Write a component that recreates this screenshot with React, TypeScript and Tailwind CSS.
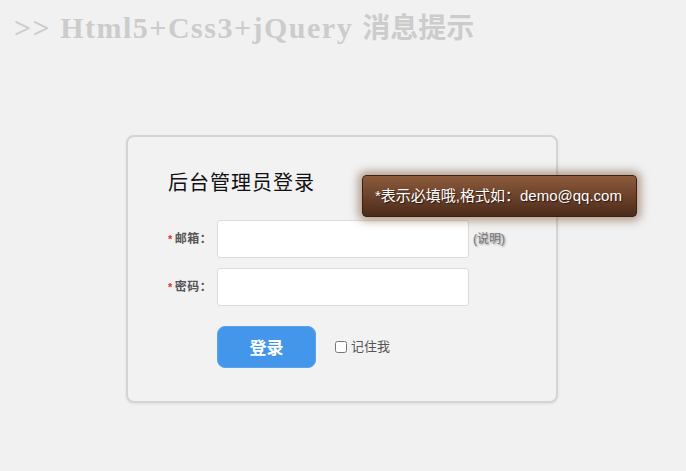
import React, { useState } from 'react';

const App: React.FC = () => {
  const [remember, setRemember] = useState(false);

  return (
    <div className="min-h-[471px] w-full bg-[#f1f1f1] font-['Liberation_Sans','Noto_Sans_CJK_SC',sans-serif]">
      <h1 className="px-[14px] pt-[10px] text-[30px] leading-[36px] font-bold tracking-[1.5px] text-[#cccccc] font-['Liberation_Serif','Noto_Sans_CJK_SC',serif]">
        &gt;&gt; Html5+Css3+jQuery <span className="text-[28px] tracking-normal">消息提示</span>
      </h1>

      <div className="relative ml-[126px] mt-[88px] w-[432px] h-[268px] rounded-[8px] border-2 border-[#d4d4d4] bg-[#f2f2f2] shadow-[0_1px_3px_rgba(0,0,0,0.08)] px-[40px] pt-[31px]">
        <h2 className="text-[20px] leading-[28px] tracking-[1px] text-[#111] font-['Noto_Sans_CJK_SC',serif]">
          后台管理员登录
        </h2>

        <div className="mt-[24px] flex flex-col gap-[10px]">
          <div className="flex items-center">
            <label className="w-[42px] mr-[7px] text-[12px] font-bold text-[#555] whitespace-nowrap tracking-[0.5px]">
              <span className="text-[#d33] text-[11px] mr-[2px]">*</span>邮箱：
            </label>
            <input className="w-[252px] h-[38px] rounded-[3px] border border-[#dcdcdc] bg-white outline-none px-2 text-[14px]" />
            <span className="ml-[4px] text-[12px] text-[#777] [text-shadow:1px_1px_2px_rgba(0,0,0,0.45)]">(说明)</span>
          </div>
          <div className="flex items-center">
            <label className="w-[42px] mr-[7px] text-[12px] font-bold text-[#555] whitespace-nowrap tracking-[0.5px]">
              <span className="text-[#d33] text-[11px] mr-[2px]">*</span>密码：
            </label>
            <input type="password" className="w-[252px] h-[38px] rounded-[3px] border border-[#dcdcdc] bg-white outline-none px-2 text-[14px]" />
          </div>
        </div>

        <div className="mt-[20px] ml-[49px] flex items-center">
          <button className="w-[99px] h-[42px] rounded-[8px] bg-[#4496ea] border border-[#5aa2ec] text-white text-[17px] font-bold font-['Noto_Sans_CJK_SC',serif]">
            登录
          </button>
          <label className="ml-[19px] flex items-center text-[13px] text-[#555]">
            <input
              type="checkbox"
              checked={remember}
              onChange={() => setRemember(!remember)}
              className="w-[12px] h-[12px] mr-[4px] m-0"
            />
            记住我
          </label>
        </div>

        <div className="absolute left-[234px] top-[38px] w-[275px] h-[42px] rounded-[4px] border border-[#3a2012] bg-gradient-to-b from-[#8d5b3c] to-[#4c2b1a] shadow-[0_0_9px_4px_rgba(120,80,50,0.5)] flex items-center pl-[12px] text-[15px] text-white whitespace-nowrap [text-shadow:1px_1px_1px_rgba(0,0,0,0.6)]">
          *表示必填哦,格式如：demo@qq.com
        </div>
      </div>
    </div>
  );
};

export default App;
